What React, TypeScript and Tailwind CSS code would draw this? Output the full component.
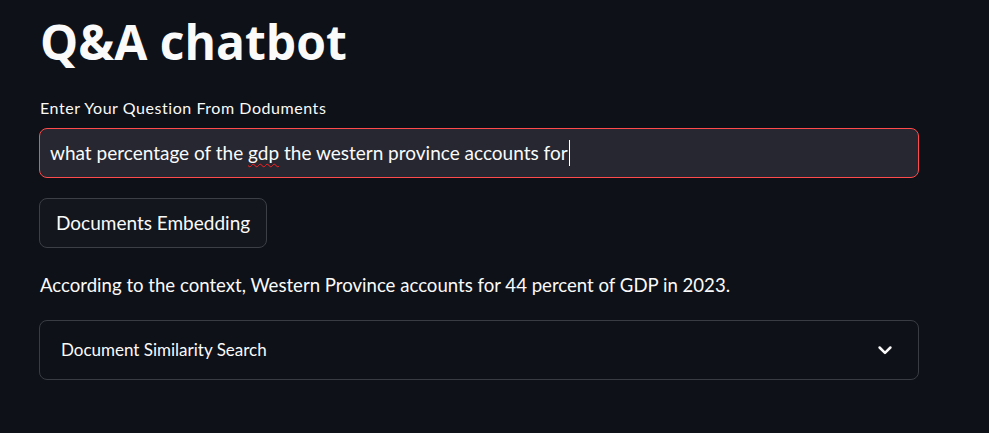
import React from "react";

export default function App() {
  return (
    <div className="min-h-[433px] w-full bg-[#0e1117] text-[#fafafa]" style={{ fontFamily: "Lato, 'Noto Sans', sans-serif" }}>
      <div className="flex w-[880px] flex-col pl-[39px] pt-[12px]">
        <h1 className="pl-[1px] text-[48px] font-bold leading-[60px]" style={{ fontFamily: "'Open Sans', Lato, sans-serif" }}>Q&amp;A chatbot</h1>
        <label className="mt-[26px] pl-[1px] text-[16px] leading-[20px] tracking-[0.55px]">Enter Your Question From Doduments</label>
        <div className="mt-[10px] flex h-[50px] w-[880px] items-center rounded-[8px] border border-[#ff4b4b] bg-[#262730] px-[10px]">
          <span className="text-[19px] leading-[24px]">
            what percentage of the <span className="underline decoration-wavy decoration-[#ff2020] decoration-1 underline-offset-[3px]">gdp</span> the western province accounts for
          </span>
          <span className="ml-[1px] h-[26px] w-[1px] bg-white" />
        </div>
        <div className="mt-[20px]">
          <button className="h-[50px] rounded-[8px] border border-[#3d3f46] bg-[#13161d] px-[16px] text-[19px] leading-[24px]">Documents Embedding</button>
        </div>
        <p className="mt-[23px] pl-[1px] text-[18.6px] leading-[28px]">According to the context, Western Province accounts for 44 percent of GDP in 2023.</p>
        <div className="mt-[21px] flex h-[60px] w-[880px] items-center justify-between rounded-[8px] border border-[#3a3c43] pl-[21px] pr-[23px]">
          <span className="text-[17px]">Document Similarity Search</span>
          <svg width="20" height="20" viewBox="0 0 24 24" fill="none" stroke="#fafafa" strokeWidth="3" strokeLinecap="round" strokeLinejoin="round">
            <path d="M5.5 9l6.5 6.5 6.5-6.5" />
          </svg>
        </div>
      </div>
    </div>
  );
}
